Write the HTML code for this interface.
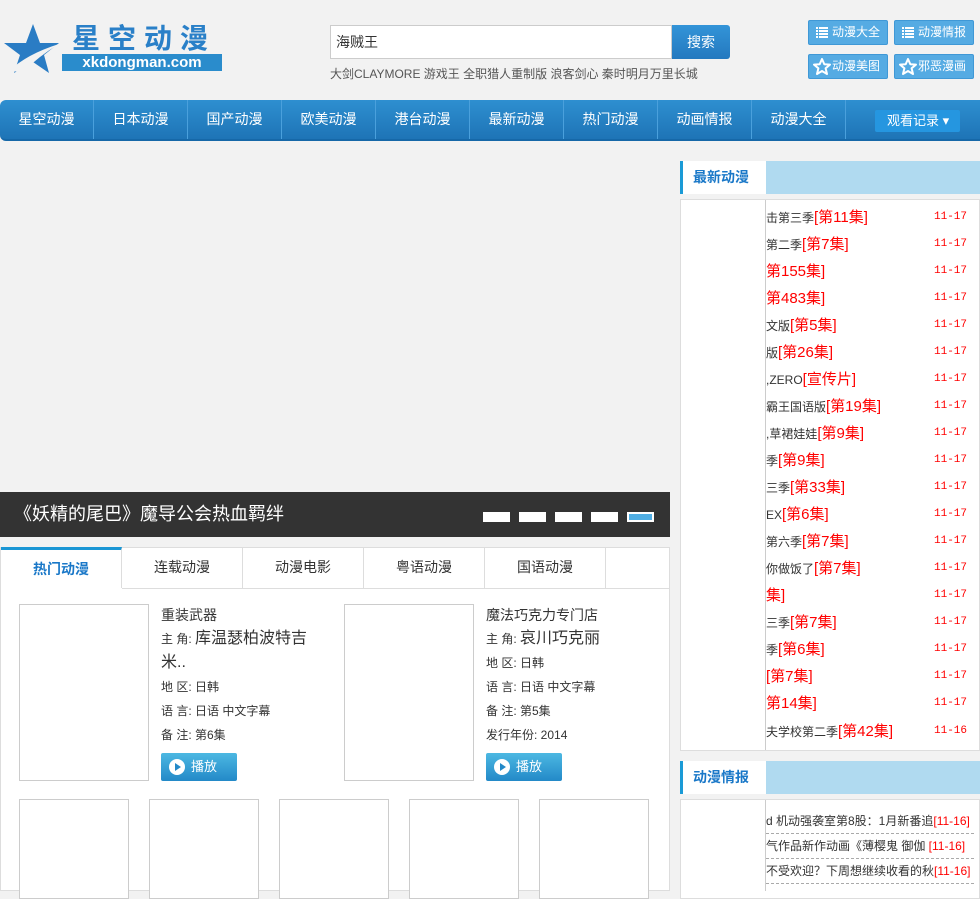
<!DOCTYPE html>
<html><head><meta charset="utf-8">
<style>
*{margin:0;padding:0;box-sizing:border-box}
body{width:980px;height:891px;overflow:hidden;background:#f2f2f2;font-family:"Liberation Sans","Noto Sans CJK SC","WenQuanYi Zen Hei",sans-serif;color:#333;position:relative}
.a{position:absolute}
.nav{left:0;top:100px;width:980px;height:41px;background:linear-gradient(#2e8fd0,#1e74b6);border-radius:6px 0 0 6px;border-bottom:2px solid #1668a8}
.nav span{position:absolute;top:0;height:39px;line-height:38px;color:#fff;font-size:14px;text-align:center;width:94px;border-right:1px solid #4aa0dc}
.tb{background:#55abe3;border:1px solid #3f98d6;border-radius:2px;color:#fff;font-size:12px;height:25px;line-height:23px;width:80px;text-align:left;padding-left:23px}
.tab{top:548px;height:41px;width:121px;line-height:38px;text-align:center;font-size:14px;color:#333;border-right:1px solid #ddd;border-bottom:1px solid #ddd;background:#fff}
.info{font-size:12px;color:#333;line-height:24px}
.play{width:76px;height:28px;background:linear-gradient(#4cb8e2,#2389c8);border-radius:2px;color:#fff;font-size:13px;line-height:28px;padding-left:30px}
.play:before{content:"";position:absolute;left:8px;top:6px;width:16px;height:16px;border-radius:50%;background:#fff}
.play:after{content:"";position:absolute;left:14px;top:10px;border-left:6px solid #2389c8;border-top:4px solid transparent;border-bottom:4px solid transparent}
.thumb{border:1px solid #ccc;background:#fff}
.row{left:766px;font-size:12px;color:#333;white-space:nowrap;height:27px;line-height:27px}
.row b{font-weight:normal;color:#f00;font-size:15px}
.dt{left:934px;font-size:11px;color:#f00;font-family:"Liberation Mono",monospace;line-height:27px}
.ic{position:absolute;width:10px;height:10px}
</style></head><body>
<svg class="a" style="left:3px;top:24px" width="58" height="50" viewBox="0 0 58 50">
<polygon points="30,0 37,19 56,19 41,31 46,49 30,38 11,49 17,31 1,19 23,19" fill="#2a7cc4"/>
<path d="M6,47 Q24,30 56,20 Q36,32 20,48 Z" fill="#f2f2f2"/>
</svg>
<div class="a" style="left:72px;top:24px;font-size:28px;color:#2a80c8;letter-spacing:8px;line-height:30px;font-weight:bold">星空动漫</div>
<div class="a" style="left:62px;top:54px;width:160px;height:17px;background:#2a8ccc;color:#fff;font-size:15px;font-weight:bold;line-height:17px;text-align:center">xkdongman.com</div>
<div class="a" style="left:330px;top:25px;width:342px;height:34px;border:1px solid #ccc;background:#fff;font-size:14px;line-height:32px;padding-left:5px">海贼王</div>
<div class="a" style="left:672px;top:25px;width:58px;height:34px;background:linear-gradient(#3394d8,#2479bf);border-radius:0 3px 3px 0;color:#fff;font-size:14px;line-height:34px;text-align:center">搜索</div>
<div class="a" style="left:330px;top:65px;font-size:12px;color:#555">大剑CLAYMORE 游戏王 全职猎人重制版 浪客剑心 秦时明月万里长城</div>
<div class="a tb" style="left:808px;top:20px">动漫大全</div>
<div class="a tb" style="left:894px;top:20px">动漫情报</div>
<div class="a tb" style="left:808px;top:54px">动漫美图</div>
<div class="a tb" style="left:894px;top:54px">邪恶漫画</div>
<svg class="a" style="left:816px;top:27px" width="12" height="11"><g fill="#fff"><rect x="0" y="0" width="2" height="2"/><rect x="3" y="0" width="9" height="2"/><rect x="0" y="3" width="2" height="2"/><rect x="3" y="3" width="9" height="2"/><rect x="0" y="6" width="2" height="2"/><rect x="3" y="6" width="9" height="2"/><rect x="0" y="9" width="2" height="2"/><rect x="3" y="9" width="9" height="2"/></g></svg>
<svg class="a" style="left:902px;top:27px" width="12" height="11"><g fill="#fff"><rect x="0" y="0" width="2" height="2"/><rect x="3" y="0" width="9" height="2"/><rect x="0" y="3" width="2" height="2"/><rect x="3" y="3" width="9" height="2"/><rect x="0" y="6" width="2" height="2"/><rect x="3" y="6" width="9" height="2"/><rect x="0" y="9" width="2" height="2"/><rect x="3" y="9" width="9" height="2"/></g></svg>
<svg class="a" style="left:813px;top:58px" width="18" height="17" viewBox="0 0 18 17"><polygon points="9,1 11.3,6.2 17,6.6 12.6,10.3 14,16 9,13 4,16 5.4,10.3 1,6.6 6.7,6.2" fill="none" stroke="#fff" stroke-width="2" stroke-linejoin="round"/></svg>
<svg class="a" style="left:899px;top:58px" width="18" height="17" viewBox="0 0 18 17"><polygon points="9,1 11.3,6.2 17,6.6 12.6,10.3 14,16 9,13 4,16 5.4,10.3 1,6.6 6.7,6.2" fill="none" stroke="#fff" stroke-width="2" stroke-linejoin="round"/></svg>
<div class="a nav">
<span style="left:0">星空动漫</span><span style="left:94px">日本动漫</span><span style="left:188px">国产动漫</span><span style="left:282px">欧美动漫</span><span style="left:376px">港台动漫</span><span style="left:470px">最新动漫</span><span style="left:564px">热门动漫</span><span style="left:658px">动画情报</span><span style="left:752px">动漫大全</span>
<div class="a" style="left:875px;top:10px;width:85px;height:22px;background:#2596e0;border-radius:2px;color:#fff;font-size:13px;line-height:22px;padding-left:12px">观看记录 ▾</div>
</div>
<div class="a" style="left:0;top:492px;width:670px;height:45px;background:#333"></div>
<div class="a" style="left:14px;top:492px;font-size:18px;color:#fff;line-height:45px">《妖精的尾巴》魔导公会热血羁绊</div>
<div class="a" style="left:483px;top:512px;width:27px;height:10px;background:#fff"></div>
<div class="a" style="left:519px;top:512px;width:27px;height:10px;background:#fff"></div>
<div class="a" style="left:555px;top:512px;width:27px;height:10px;background:#fff"></div>
<div class="a" style="left:591px;top:512px;width:27px;height:10px;background:#fff"></div>
<div class="a" style="left:627px;top:512px;width:27px;height:10px;background:#4faee4;border:2px solid #fff"></div>
<div class="a" style="left:0;top:547px;width:670px;height:344px;background:#fff;border:1px solid #ddd"></div>
<div class="a" style="left:606px;top:548px;width:63px;height:41px;border-bottom:1px solid #ddd"></div>
<div class="a tab" style="left:1px;border-bottom:none;border-top:3px solid #1a96d4;color:#1a78c8;font-weight:bold;top:547px">热门动漫</div>
<div class="a tab" style="left:122px">连载动漫</div>
<div class="a tab" style="left:243px">动漫电影</div>
<div class="a tab" style="left:364px">粤语动漫</div>
<div class="a tab" style="left:485px">国语动漫</div>
<div class="a thumb" style="left:19px;top:604px;width:130px;height:177px"></div>
<div class="a thumb" style="left:344px;top:604px;width:130px;height:177px"></div>
<div class="a info" style="left:161px;top:603px;width:165px">
<div style="font-size:14px">重装武器</div>
<div>主 角: <span style="font-size:16px">库温瑟柏波特吉米..</span></div>
<div>地 区: 日韩</div><div>语 言: 日语 中文字幕</div><div>备 注: 第6集</div></div>
<div class="a play" style="left:161px;top:753px">播放</div>
<div class="a info" style="left:486px;top:603px;width:170px">
<div style="font-size:14px">魔法巧克力专门店</div>
<div>主 角: <span style="font-size:16px">哀川巧克丽</span></div>
<div>地 区: 日韩</div><div>语 言: 日语 中文字幕</div><div>备 注: 第5集</div><div>发行年份: 2014</div></div>
<div class="a play" style="left:486px;top:753px">播放</div>
<div class="a thumb" style="left:19px;top:799px;width:110px;height:100px"></div>
<div class="a thumb" style="left:149px;top:799px;width:110px;height:100px"></div>
<div class="a thumb" style="left:279px;top:799px;width:110px;height:100px"></div>
<div class="a thumb" style="left:409px;top:799px;width:110px;height:100px"></div>
<div class="a thumb" style="left:539px;top:799px;width:110px;height:100px"></div>

<div class="a" style="left:680px;top:161px;width:300px;height:33px;background:#b0daf0"></div>
<div class="a" style="left:680px;top:161px;width:86px;height:33px;background:#fff;border-left:3px solid #1a9ad6;color:#1a78c8;font-weight:bold;font-size:14px;line-height:33px;padding-left:10px">最新动漫</div>
<div class="a" style="left:680px;top:199px;width:300px;height:552px;background:#fff;border:1px solid #ddd"></div>
<div class="a" style="left:765px;top:200px;width:1px;height:550px;background:#ccc"></div>
<div class="a row" style="top:204px">击第三季<b>[第11集]</b></div>
<div class="a row" style="top:231px">第二季<b>[第7集]</b></div>
<div class="a row" style="top:258px"><b>第155集]</b></div>
<div class="a row" style="top:285px"><b>第483集]</b></div>
<div class="a row" style="top:312px">文版<b>[第5集]</b></div>
<div class="a row" style="top:339px">版<b>[第26集]</b></div>
<div class="a row" style="top:366px">,ZERO<b>[宣传片]</b></div>
<div class="a row" style="top:393px">霸王国语版<b>[第19集]</b></div>
<div class="a row" style="top:420px">,草裙娃娃<b>[第9集]</b></div>
<div class="a row" style="top:447px">季<b>[第9集]</b></div>
<div class="a row" style="top:474px">三季<b>[第33集]</b></div>
<div class="a row" style="top:501px">EX<b>[第6集]</b></div>
<div class="a row" style="top:528px">第六季<b>[第7集]</b></div>
<div class="a row" style="top:555px">你做饭了<b>[第7集]</b></div>
<div class="a row" style="top:582px"><b>集]</b></div>
<div class="a row" style="top:609px">三季<b>[第7集]</b></div>
<div class="a row" style="top:636px">季<b>[第6集]</b></div>
<div class="a row" style="top:663px"><b>[第7集]</b></div>
<div class="a row" style="top:690px"><b>第14集]</b></div>
<div class="a row" style="top:718px">夫学校第二季<b>[第42集]</b></div>
<div class="a dt" style="top:204px">11-17</div><div class="a dt" style="top:231px">11-17</div><div class="a dt" style="top:258px">11-17</div><div class="a dt" style="top:285px">11-17</div><div class="a dt" style="top:312px">11-17</div><div class="a dt" style="top:339px">11-17</div><div class="a dt" style="top:366px">11-17</div><div class="a dt" style="top:393px">11-17</div><div class="a dt" style="top:420px">11-17</div><div class="a dt" style="top:447px">11-17</div><div class="a dt" style="top:474px">11-17</div><div class="a dt" style="top:501px">11-17</div><div class="a dt" style="top:528px">11-17</div><div class="a dt" style="top:555px">11-17</div><div class="a dt" style="top:582px">11-17</div><div class="a dt" style="top:609px">11-17</div><div class="a dt" style="top:636px">11-17</div><div class="a dt" style="top:663px">11-17</div><div class="a dt" style="top:690px">11-17</div><div class="a dt" style="top:718px">11-16</div>

<div class="a" style="left:680px;top:761px;width:300px;height:33px;background:#b0daf0"></div>
<div class="a" style="left:680px;top:761px;width:86px;height:33px;background:#fff;border-left:3px solid #1a9ad6;color:#1a78c8;font-weight:bold;font-size:14px;line-height:33px;padding-left:10px">动漫情报</div>
<div class="a" style="left:680px;top:799px;width:300px;height:100px;background:#fff;border:1px solid #ddd"></div>
<div class="a" style="left:765px;top:800px;width:1px;height:91px;background:#ccc"></div>
<div class="a" style="left:766px;top:808px;width:208px;height:26px;border-bottom:1px dashed #aaa;font-size:12px;line-height:26px;white-space:nowrap;overflow:hidden">d 机动强袭室第8股：1月新番追<span style="color:#f00">[11-16]</span></div>
<div class="a" style="left:766px;top:833px;width:208px;height:26px;border-bottom:1px dashed #aaa;font-size:12px;line-height:26px;white-space:nowrap;overflow:hidden">气作品新作动画《薄樱鬼 御伽 <span style="color:#f00">[11-16]</span></div>
<div class="a" style="left:766px;top:858px;width:208px;height:26px;border-bottom:1px dashed #aaa;font-size:12px;line-height:26px;white-space:nowrap;overflow:hidden">不受欢迎？下周想继续收看的秋<span style="color:#f00">[11-16]</span></div>
</body></html>
